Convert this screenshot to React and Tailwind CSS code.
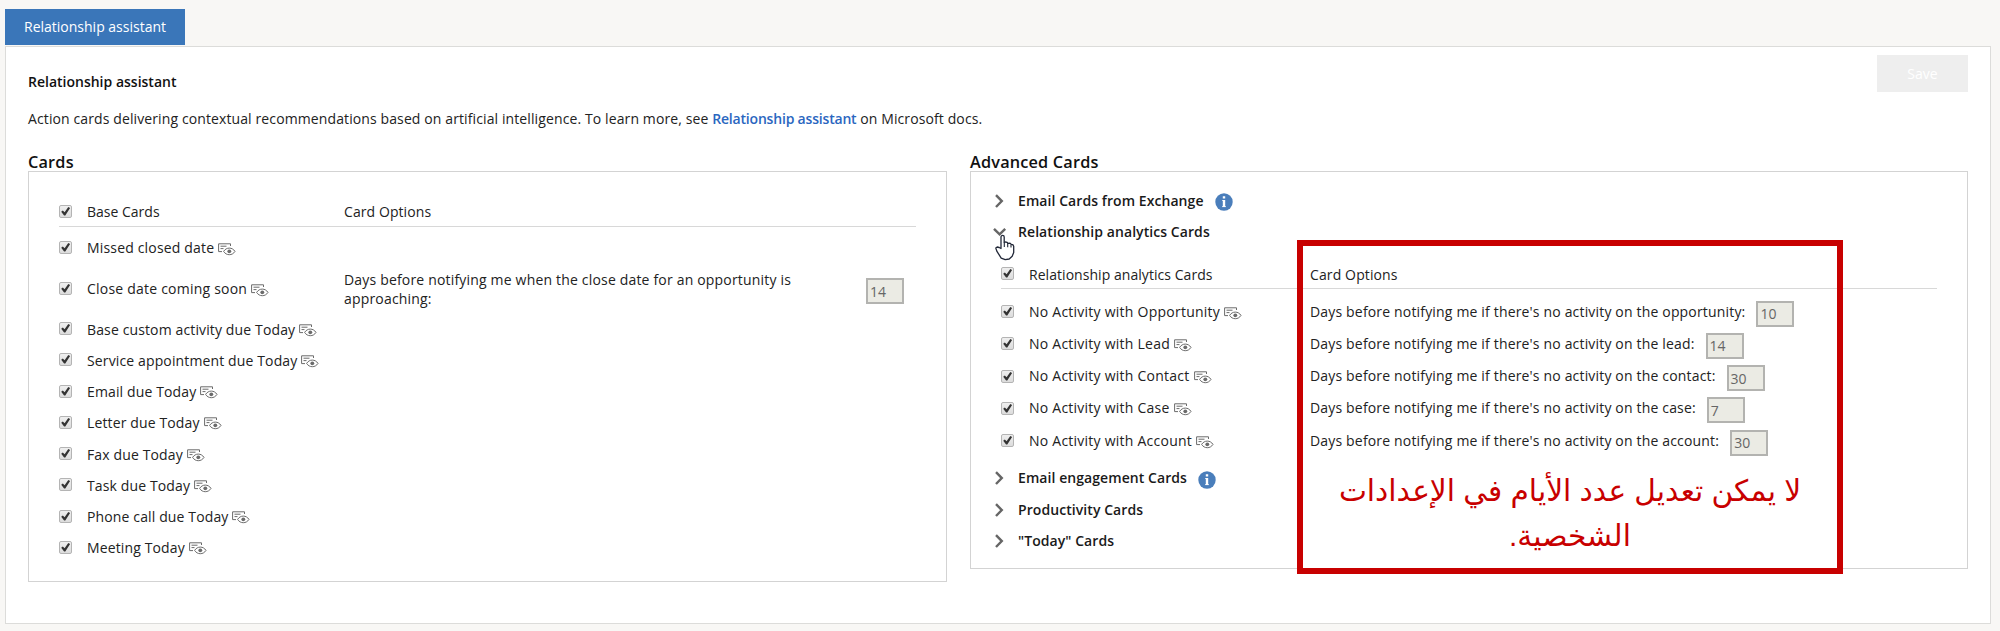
function CardPreview() {
  return (
    <svg width="18" height="13" viewBox="0 0 18 13" fill="none" stroke="#6b6b6b" className="ml-1 mt-[3px] shrink-0">
      <path d="M12.500 3V.8H.6V8.600H4M2.500 3.200h6M2.500 5.600h3" strokeWidth="1" />
      <path d="M5.600 8.400C7 6.200 9 5.100 11.300 5.100s4.300 1.100 5.700 3.300c-1.400 2.200-3.400 3.300-5.700 3.300S7 10.600 5.600 8.400Z" strokeWidth="1" />
      <circle cx="11.300" cy="8.300" r="1.900" fill="#6b6b6b" stroke="none" />
    </svg>
  );
}

function Check() {
  return (
    <span className="flex size-[13px] shrink-0 items-center justify-center rounded-[2px] border border-[#b4b4b4] bg-linear-to-b from-[#efefef] to-[#dcdcdc]">
      <svg width="11" height="11" viewBox="0 0 11 11" className="shrink-0">
        <path d="M1.200 5.800 2.800 4.400l1.800 1.800L8.300 1l1.800.9L5.300 9.500H4.100Z" fill="#333" />
      </svg>
    </span>
  );
}

function DaysInput({ value }) {
  return (
    <span className="flex h-[26px] w-[38px] shrink-0 items-center border-2 border-[#b3b3b0] bg-[#ebebe4] pl-0.5 text-[14px] text-[#666]">
      <span className="pt-px">{value}</span>
    </span>
  );
}

function Info() {
  return (
    <svg width="18" height="18" viewBox="0 0 18 18" className="shrink-0">
      <circle cx="9" cy="9" r="8.700" fill="#4a7ebb" />
      <path d="M7.300 7.500H9v6M7.200 13.600h3.600" stroke="#fff" strokeWidth="1" fill="none" />
      <path d="M9 3.200v2.300M9 7v6.800" stroke="#fff" strokeWidth="2.400" fill="none" />
    </svg>
  );
}

function Chevron({ open }) {
  return (
    <svg width="14" height="14" viewBox="0 0 14 14" fill="none" stroke="#666" strokeWidth="2.400" className="shrink-0">
      <path d={open ? "M1 3.800 6.600 9.400l5.600-5.600" : "M3 1.200l5.800 5.900L3 13"} />
    </svg>
  );
}

function Section({ title, info, open }) {
  return (
    <div className="flex h-[31.200px] items-center">
      <Chevron open={open} />
      <span className="ml-[11px] font-semibold tracking-[0.070px] text-[#1a1a1a]">{title}</span>
      {info && <span className="ml-[11px] mt-[3px]"><Info /></span>}
    </div>
  );
}

const activities = [
  "Base custom activity due Today",
  "Service appointment due Today",
  "Email due Today",
  "Letter due Today",
  "Fax due Today",
  "Task due Today",
  "Phone call due Today",
  "Meeting Today",
];

const analytics = [
  ["Opportunity", "opportunity", 10],
  ["Lead", "lead", 14],
  ["Contact", "contact", 30],
  ["Case", "case", 7],
  ["Account", "account", 30],
];

export default function App() {
  return (
    <div className="h-[631px] w-[2000px] overflow-hidden bg-[#f8f7f5] pl-[5px] pt-[9px] font-['Open_Sans','Noto_Sans',sans-serif] text-[14px] leading-[20px] text-[#222]">
      <div className="flex h-9 w-[180px] items-center bg-[#3a76b9] pl-[19px] text-white">Relationship assistant</div>
      <main className="relative mt-px h-[578px] w-[1986px] border border-[#dcdcda] bg-white pl-[22px] pr-[22px]">
        <div className="flex h-[56px] justify-between">
          <h1 className="pt-[25px] font-semibold text-[#111]">Relationship assistant</h1>
          <button className="mt-2 h-[37px] w-[91px] bg-[#eee] text-[14px] text-white">Save</button>
        </div>
        <p className="pt-[6px] tracking-[0.110px]">
          Action cards delivering contextual recommendations based on artificial intelligence. To learn more, see{" "}
          <a className="font-semibold tracking-[-0.190px] text-[#2a66c0]">Relationship assistant</a> on Microsoft docs.
        </p>

        <div className="mt-[19px] flex items-start gap-[23px]">
          <section className="w-[919px]">
            <h2 className="h-[23px] pt-px text-[16.300px] leading-[26px] font-semibold tracking-[0.180px] text-[#111]">Cards</h2>
            <div className="h-[411px] border border-[#d3d3d3] pl-[30px] pr-[30px] pt-[25px]">
              <div className="flex h-[30px] items-center border-b border-[#d8d8d8]">
                <Check />
                <span className="ml-[15px] w-[257px] pt-px">Base Cards</span>
                <span className="pt-px tracking-[0.080px]">Card Options</span>
              </div>
              <div className="flex h-[41px] items-center">
                <Check />
                <span className="ml-[15px] tracking-[0.170px]">Missed closed date</span>
                <CardPreview />
              </div>
              <div className="flex h-[41px] items-center">
                <Check />
                <div className="ml-[15px] flex w-[257px] items-center">
                  <span className="tracking-[0.220px]">Close date coming soon</span>
                  <CardPreview />
                </div>
                <p className="w-[460px] leading-[19px] tracking-[0.180px]">Days before notifying me when the close date for an opportunity is approaching:</p>
                <span className="ml-[62px] mt-[5px]"><DaysInput value={14} /></span>
              </div>
              <div className="mt-1">
                {activities.map((name) => (
                  <div key={name} className="flex h-[31.250px] items-center">
                    <Check />
                    <span className="ml-[15px] pt-0.5 tracking-[0.130px]">{name}</span>
                    <CardPreview />
                  </div>
                ))}
              </div>
            </div>
          </section>

          <section className="w-[998px]">
            <h2 className="h-[23px] pt-px text-[16.300px] leading-[26px] font-semibold tracking-[0.180px] text-[#111]">Advanced Cards</h2>
            <div className="h-[398px] border border-[#d3d3d3] pl-[22px] pr-[30px] pt-[13px]">
              <Section title="Email Cards from Exchange" info />
              <Section title="Relationship analytics Cards" open />
              <div className="ml-2 mt-[12px]">
                <div className="flex h-[30px] items-center border-b border-[#d8d8d8]">
                  <Check />
                  <span className="ml-[15px] w-[281px] pt-0.5 tracking-[0.050px]">Relationship analytics Cards</span>
                  <span className="pt-0.5 tracking-[0.120px]">Card Options</span>
                </div>
                <div className="pt-[6px]">
                  {analytics.map(([name, noun, days]) => (
                    <div key={name} className="flex h-[32.300px] items-center">
                      <Check />
                      <div className="ml-[15px] flex w-[281px] items-center">
                        <span className="tracking-[0.240px]">No Activity with {name}</span>
                        <CardPreview />
                      </div>
                      <span className="tracking-[0.170px]">Days before notifying me if there's no activity on the {noun}:</span>
                      <span className="ml-[11px] mt-1"><DaysInput value={days} /></span>
                    </div>
                  ))}
                </div>
              </div>
              <div className="mt-[6px]">
                <Section title="Email engagement Cards" info />
                <Section title="Productivity Cards" />
                <Section title={'"Today" Cards'} />
              </div>
            </div>
          </section>
        </div>

        <svg width="21" height="27" viewBox="0 0 21 27" className="absolute left-[988px] top-[187px]">
          <path d="M7 14.500V3a1.600 1.600 0 0 1 3.200 0V8.500l1.200-.5 1.800.3.8 1 2-.2 1.200 1.200 1.600.3.900 1.700v6.200l-1.500 3.700-3 2.800-4 .6-4-1.500-4.400-7-1-3 1.400-1.100 2 .5Z" fill="#fff" stroke="#222838" strokeWidth="1.300" strokeLinejoin="round" />
          <path d="M10.300 8.500v4.500M13.700 9v4.300M17 10.500v3" stroke="#222838" strokeWidth="1.100" />
        </svg>

        <div dir="rtl" className="absolute left-[1291px] top-[193px] h-[334px] w-[546px] border-6 border-[#c80000] pt-[222px] text-center font-['Liberation_Sans','DejaVu_Sans',sans-serif] text-[29.700px] leading-[45px] text-[#c80000]">
          لا يمكن تعديل عدد الأيام في الإعدادات
          <br />
          الشخصية.
        </div>
      </main>
    </div>
  );
}
